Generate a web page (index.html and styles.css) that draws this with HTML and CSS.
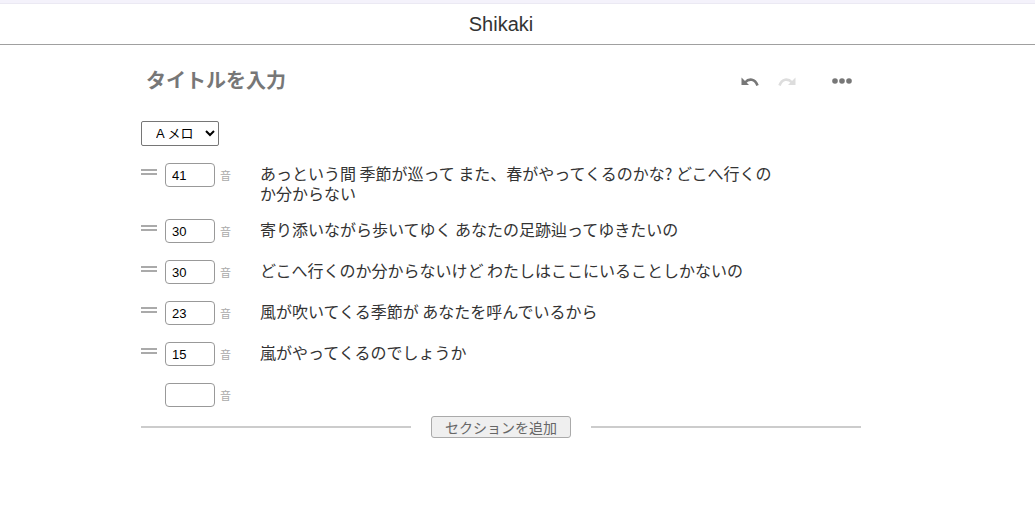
FILE: index.html
```html
<!DOCTYPE html>
<html lang="ja">
<head>
    <meta charset="UTF-8">
    <meta name="viewport" content="width=device-width, initial-scale=1.0">
    <title>Shikaki</title>
    <link rel="stylesheet" href="styles.css">
</head>
<body>

    <div class="topbar"></div>
    <div class="header">
        <div class="header_inner">Shikaki</div>
    </div>

    <div class="wrap">
        <div class="inner">

            <div class="title_row">
                <div class="title">タイトルを入力</div>
                <div class="tools">
                    <svg class="ico undo" width="20" height="12" viewBox="0 0 20 12">
                        <path d="M1.5 2.5 L1.5 10 L9 10 Z" fill="currentColor"/>
                        <path d="M5 7.5 C9 3 15 3.5 17.5 10.5" fill="none" stroke="currentColor" stroke-width="2.6"/>
                    </svg>
                    <svg class="ico redo" width="20" height="12" viewBox="0 0 20 12">
                        <path d="M18.5 2.5 L18.5 10 L11 10 Z" fill="currentColor"/>
                        <path d="M15 7.5 C11 3 5 3.5 2.5 10.5" fill="none" stroke="currentColor" stroke-width="2.6"/>
                    </svg>
                    <svg class="ico more" width="20" height="8" viewBox="0 0 20 8">
                        <circle cx="3" cy="4" r="2.8" fill="currentColor"/>
                        <circle cx="10" cy="4" r="2.8" fill="currentColor"/>
                        <circle cx="17" cy="4" r="2.8" fill="currentColor"/>
                    </svg>
                </div>
            </div>

            <select class="section_select">
                <option>A メロ</option>
            </select>

            <div class="lines">
                <div class="line">
                    <span class="handle"></span>
                    <input class="count" type="text" value="41">
                    <span class="unit">音</span>
                    <div class="lyric">あっという間 季節が巡って また、春がやってくるのかな? どこへ行くのか分からない</div>
                </div>
                <div class="line">
                    <span class="handle"></span>
                    <input class="count" type="text" value="30">
                    <span class="unit">音</span>
                    <div class="lyric">寄り添いながら歩いてゆく あなたの足跡辿ってゆきたいの</div>
                </div>
                <div class="line">
                    <span class="handle"></span>
                    <input class="count" type="text" value="30">
                    <span class="unit">音</span>
                    <div class="lyric">どこへ行くのか分からないけど わたしはここにいることしかないの</div>
                </div>
                <div class="line">
                    <span class="handle"></span>
                    <input class="count" type="text" value="23">
                    <span class="unit">音</span>
                    <div class="lyric">風が吹いてくる季節が あなたを呼んでいるから</div>
                </div>
                <div class="line">
                    <span class="handle"></span>
                    <input class="count" type="text" value="15">
                    <span class="unit">音</span>
                    <div class="lyric">嵐がやってくるのでしょうか</div>
                </div>
                <div class="line">
                    <span class="handle empty"></span>
                    <input class="count" type="text" value="">
                    <span class="unit">音</span>
                    <div class="lyric"></div>
                </div>
            </div>

            <div class="add_row">
                <span class="rule"></span>
                <button class="add_btn">セクションを追加</button>
                <span class="rule"></span>
            </div>

        </div>
    </div>

</body>
</html>
```

FILE: styles.css
```css
*{margin:0;padding:0;box-sizing:border-box;}
body{background:#fff;font-family:"Liberation Sans","Noto Sans CJK JP",sans-serif;color:#333;}

.topbar{height:4px;background:#f4f2fb;border-bottom:1px solid #ebe9f3;}
.header{height:41px;border-bottom:1px solid #a0a0a0;}
.header .header_inner{width:1002px;height:40px;line-height:40px;text-align:center;font-size:20px;color:#333;}

.wrap{width:1002px;}
.wrap .inner{width:720px;margin:0 auto;}

.title_row{display:flex;align-items:center;justify-content:space-between;height:30px;margin-top:20px;}
.title{font-size:20px;font-weight:bold;color:#777;padding-left:5px;font-family:"Noto Sans CJK JP",sans-serif;margin-top:-2px;}
.tools{display:flex;align-items:center;padding-right:9px;padding-top:2px;}
.ico{display:block;}
.undo{color:#777;margin-right:17px;}
.redo{color:#ddd;margin-right:35px;}
.more{color:#777;}

.section_select{display:block;margin-top:26px;width:78px;height:25px;border:1px solid #767676;border-radius:2px;background:#fff;font-size:13px;font-family:"Liberation Sans","Noto Sans CJK JP",sans-serif;color:#000;padding-left:10px;}

.lines{margin-top:17px;}
.line{display:flex;align-items:flex-start;min-height:25px;margin-bottom:16px;}
.handle{width:16px;height:6px;margin-top:6px;margin-right:8px;border-top:2px solid #aaa;border-bottom:2px solid #aaa;flex:none;}
.handle.empty{border-color:transparent;}
.count{width:50px;height:24px;border:1px solid #999;border-radius:4px;font-size:13px;padding-left:6px;font-family:"Liberation Sans",sans-serif;color:#000;flex:none;}
.unit{width:45px;padding-left:5px;padding-top:5px;font-size:11px;line-height:14px;color:#aaa;flex:none;font-family:"Noto Sans CJK JP",sans-serif;}
.lyric{width:522px;font-size:16px;line-height:20px;color:#333;font-family:"Noto Sans CJK JP",sans-serif;}

.add_row{display:flex;align-items:center;margin-top:-8px;}
.add_row .rule{flex:1;height:2px;background:#ccc;}
.add_btn{margin:0 20px;width:140px;height:22px;border:1px solid #aaa;border-radius:3px;background:#efefef;color:#666;font-size:14px;font-family:"Noto Sans CJK JP",sans-serif;line-height:18px;}
```
